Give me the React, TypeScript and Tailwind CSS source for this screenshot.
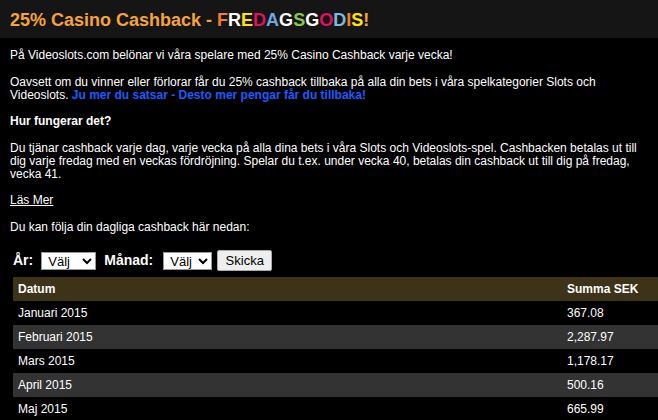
import React from "react";

const LETTERS: [string, string][] = [
  ["F", "text-[#f47f20]"],
  ["R", "text-white"],
  ["E", "text-[#ffe600]"],
  ["D", "text-[#e0115f]"],
  ["A", "text-[#6fa8dc]"],
  ["G", "text-white"],
  ["S", "text-[#8bc34a]"],
  ["G", "text-white"],
  ["O", "text-[#e0115f]"],
  ["D", "text-[#7ab9e6]"],
  ["I", "text-[#f47f20]"],
  ["S", "text-[#ffe600]"],
];

const ROWS = [
  ["Januari 2015", "367.08"],
  ["Februari 2015", "2,287.97"],
  ["Mars 2015", "1,178.17"],
  ["April 2015", "500.16"],
  ["Maj 2015", "665.99"],
];

export default function App() {
  return (
    <div className="h-[420px] w-[658px] overflow-hidden bg-black font-['Liberation_Sans',Arial,sans-serif] text-[12px] leading-[13px] text-white">
      {/* title bar */}
      <div className="flex h-[38px] items-center bg-[#151515] px-[10px] pt-[2px]">
        <h1 className="text-[18px] font-bold leading-[22px] text-[#f5a33a]">
          25% Casino Cashback - {LETTERS.map(([l, c], i) => (
            <span key={i} className={c}>{l}</span>
          ))}!
        </h1>
      </div>

      <div className="px-[10px] pt-[11px]">
        <p>På Videoslots.com belönar vi våra spelare med 25% Casino Cashback varje vecka!</p>
        <p className="mt-[14px]">
          Oavsett om du vinner eller förlorar får du 25% cashback tillbaka på alla din bets i våra spelkategorier Slots och Videoslots.{" "}
          <span className="font-bold text-[#1a5cff]">Ju mer du satsar - Desto mer pengar får du tillbaka!</span>
        </p>
        <p className="mt-[13px] font-bold">Hur fungerar det?</p>
        <p className="mt-[14px]">
          Du tjänar cashback varje dag, varje vecka på alla dina bets i våra Slots och Videoslots-spel. Cashbacken betalas ut till dig varje fredag med en veckas fördröjning. Spelar du t.ex. under vecka 40, betalas din cashback ut till dig på fredag, vecka 41.
        </p>
        <p className="mt-[13px]">
          <a className="underline">Läs Mer</a>
        </p>
        <p className="mt-[14px]">Du kan följa din dagliga cashback här nedan:</p>

        <div className="mt-[16px] flex h-[21px] items-center pl-[3px]">
          <span className="text-[14px] font-bold">År:</span>
          <select className="ml-[8px] h-[18px] w-[55px] border border-[#999] bg-white px-[2px] text-[13px] leading-none text-black">
            <option>Välj</option>
          </select>
          <span className="ml-[8px] text-[14px] font-bold">Månad:</span>
          <select className="ml-[10px] h-[18px] w-[49px] border border-[#999] bg-white px-[2px] text-[13px] leading-none text-black">
            <option>Välj</option>
          </select>
          <button className="ml-[5px] h-[21px] w-[55px] rounded-[2px] border border-[#aaa] bg-[#eee] text-[13px] text-black">
            Skicka
          </button>
        </div>

        <div className="mt-[6px] ml-[3px] w-[660px]">
          <div className="flex h-[24px] items-center bg-[#3d3318] font-bold">
            <span className="w-[554px] pl-[5px]">Datum</span>
            <span>Summa SEK</span>
          </div>
          {ROWS.map(([d, v], i) => (
            <div key={d} className={`flex h-[24px] items-center ${i % 2 ? "bg-[#333]" : "bg-black"}`}>
              <span className="w-[554px] pl-[5px]">{d}</span>
              <span>{v}</span>
            </div>
          ))}
        </div>
      </div>
    </div>
  );
}
